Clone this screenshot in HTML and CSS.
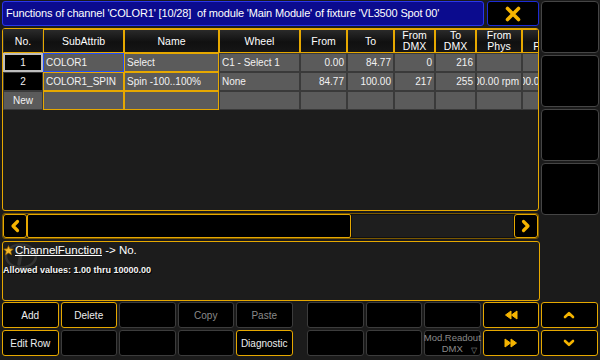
FILE: index.html
```html
<!DOCTYPE html>
<html lang="en">
<head>
<meta charset="UTF-8">
<title>Channel Functions</title>
<link rel="stylesheet" href="styles.css">
</head>
<body>
<div class="screen">
    <div class="top">
        <div class="main">
            <div class="titlebar">
                <div class="title">Functions of channel 'COLOR1' [10/28]&nbsp; of module 'Main Module' of fixture 'VL3500 Spot 00'</div>
                <div class="close">
                    <svg width="18" height="16" viewBox="0 0 18 16"><path d="M3.5 2.5 L14.5 13.5 M14.5 2.5 L3.5 13.5" stroke="#f5b400" stroke-width="3.6" stroke-linecap="round"/></svg>
                </div>
            </div>

            <div class="frame">
                <div class="grid">
                    <div class="cell head plain">No.</div>
                    <div class="cell head">SubAttrib</div>
                    <div class="cell head">Name</div>
                    <div class="cell head">Wheel</div>
                    <div class="cell head">From</div>
                    <div class="cell head">To</div>
                    <div class="cell head">From<br>DMX</div>
                    <div class="cell head">To<br>DMX</div>
                    <div class="cell head">From<br>Phys</div>
                    <div class="cell head">To<br>Phys</div>

                    <div class="cell no cur">1</div>
                    <div class="cell sel">COLOR1</div>
                    <div class="cell edit">Select</div>
                    <div class="cell">C1 - Select 1</div>
                    <div class="cell num">0.00</div>
                    <div class="cell num">84.77</div>
                    <div class="cell num">0</div>
                    <div class="cell num">216</div>
                    <div class="cell num"></div>
                    <div class="cell num"></div>

                    <div class="cell no">2</div>
                    <div class="cell edit">COLOR1_SPIN</div>
                    <div class="cell edit">Spin -100..100%</div>
                    <div class="cell">None</div>
                    <div class="cell num">84.77</div>
                    <div class="cell num">100.00</div>
                    <div class="cell num">217</div>
                    <div class="cell num">255</div>
                    <div class="cell num">-100.00 rpm</div>
                    <div class="cell num">100.00 rpm</div>

                    <div class="cell no new">New</div>
                    <div class="cell edit"></div>
                    <div class="cell edit"></div>
                    <div class="cell"></div>
                    <div class="cell"></div>
                    <div class="cell"></div>
                    <div class="cell"></div>
                    <div class="cell"></div>
                    <div class="cell"></div>
                    <div class="cell"></div>
                </div>
            </div>

            <div class="scroller">
                <div class="arrow">
                    <svg width="10" height="14" viewBox="0 0 10 14"><path d="M7.5 2.5 L3 7 L7.5 11.5" fill="none" stroke="#f5b400" stroke-width="3.2" stroke-linecap="round" stroke-linejoin="round"/></svg>
                </div>
                <div class="thumb"></div>
                <div class="track"></div>
                <div class="arrow">
                    <svg width="10" height="14" viewBox="0 0 10 14"><path d="M2.5 2.5 L7 7 L2.5 11.5" fill="none" stroke="#f5b400" stroke-width="3.2" stroke-linecap="round" stroke-linejoin="round"/></svg>
                </div>
            </div>
        </div>

        <div class="side">
            <div class="side-btn"></div>
            <div class="side-btn"></div>
            <div class="side-btn"></div>
            <div class="side-btn"></div>
        </div>
    </div>

    <div class="info">
        <svg class="watermark" width="36" height="26" viewBox="0 0 36 26"><ellipse cx="17" cy="13" rx="15" ry="11.5" fill="none" stroke="#333" stroke-width="2.5"/><path d="M17 10 L15 21" stroke="#333" stroke-width="3.5" stroke-linecap="round"/><circle cx="18" cy="5.5" r="2" fill="#333"/></svg>
        <div class="info-line">
            <svg width="11" height="11" viewBox="0 0 11 11"><path d="M5.5 0.6 L6.9 3.8 L10.4 4.1 L7.8 6.4 L8.6 9.9 L5.5 8.1 L2.4 9.9 L3.2 6.4 L0.6 4.1 L4.1 3.8 Z" fill="#f4b82a" stroke="#8a5a00" stroke-width="0.7"/></svg>
            <span class="link">ChannelFunction</span>&nbsp;-&gt; No.
        </div>
        <div class="allowed">Allowed values: 1.00 thru 10000.00</div>
    </div>

    <div class="keys">
        <div class="keygroup">
            <div class="key on">Add</div>
            <div class="key on">Delete</div>
            <div class="key"></div>
            <div class="key dim">Copy</div>
            <div class="key dim">Paste</div>
            <div class="key on">Edit Row</div>
            <div class="key"></div>
            <div class="key"></div>
            <div class="key"></div>
            <div class="key on">Diagnostic</div>
        </div>
        <div class="keygroup">
            <div class="key"></div>
            <div class="key"></div>
            <div class="key"></div>
            <div class="key on">
                <svg width="14" height="10" viewBox="0 0 14 10"><path d="M7 1 L1.5 5 L7 9 Z M13 1 L7.5 5 L13 9 Z" fill="#f5b400" stroke="#f5b400" stroke-width="1" stroke-linejoin="round"/></svg>
            </div>
            <div class="key on">
                <svg width="12" height="8" viewBox="0 0 12 8"><path d="M2 6 L6 2.2 L10 6" fill="none" stroke="#f5b400" stroke-width="2.6" stroke-linecap="round" stroke-linejoin="round"/></svg>
            </div>
            <div class="key"></div>
            <div class="key"></div>
            <div class="key dim readout">Mod.Readout<br>DMX<span class="tri">&#9661;</span></div>
            <div class="key on">
                <svg width="14" height="10" viewBox="0 0 14 10"><path d="M1 1 L6.5 5 L1 9 Z M7 1 L12.5 5 L7 9 Z" fill="#f5b400" stroke="#f5b400" stroke-width="1" stroke-linejoin="round"/></svg>
            </div>
            <div class="key on">
                <svg width="12" height="8" viewBox="0 0 12 8"><path d="M2 2 L6 5.8 L10 2" fill="none" stroke="#f5b400" stroke-width="2.6" stroke-linecap="round" stroke-linejoin="round"/></svg>
            </div>
        </div>
    </div>
</div>
</body>
</html>
```
FILE: styles.css
```css
* {
    box-sizing: border-box;
}

body {
    margin: 0;
    background-color: #1b1b1b;
    font-family: "Liberation Sans", Arial, sans-serif;
    color: #eeeeee;
}

.screen {
    width: 600px;
    height: 360px;
    padding: 1px 0 0 2px;
    overflow: hidden;
}

.top {
    display: flex;
    gap: 2px;
}

.main {
    width: 537px;
    display: flex;
    flex-direction: column;
}

/* title bar */
.titlebar {
    display: flex;
    gap: 3px;
    height: 25px;
}

.title {
    width: 482px;
    background-color: #0b0b8e;
    border: 1px solid #2a36ea;
    border-radius: 3px;
    color: #ffffff;
    font-size: 11px;
    letter-spacing: -0.15px;
    line-height: 23px;
    padding-left: 3px;
    white-space: nowrap;
    overflow: hidden;
}

.close {
    width: 52px;
    background-color: #000;
    border: 1px solid #1c2cd4;
    border-radius: 3px;
    display: flex;
    align-items: center;
    justify-content: center;
}

/* table */
.frame {
    margin-top: 2px;
    height: 183px;
    border: 1px solid #e6a800;
    border-radius: 3px;
    background-color: #1c1c1c;
    overflow: hidden;
}

.grid {
    display: grid;
    grid-template-columns: 40px 81px 95px 81px 47px 47px 41px 41px 46px 46px;
    grid-template-rows: 24px 19px 19px 19px;
    width: max-content;
}

.cell {
    border: 1px solid #3a3a3a;
    background-color: #5b5b5b;
    font-size: 10px;
    color: #f2f2f2;
    padding: 0 2px;
    display: flex;
    align-items: center;
    white-space: nowrap;
    overflow: hidden;
}

.cell.num { justify-content: flex-end; }
.cell.edit { border-color: #e6a800; }
.cell.sel { border-color: #1f4dff; }

.cell.head {
    background: linear-gradient(#2a2a2a, #101010 55%, #161616);
    border-color: #e6a800;
    justify-content: center;
    text-align: center;
    font-size: 10.5px;
    line-height: 11px;
    color: #ffffff;
}

.cell.head.plain {
    border-color: #2a2a2a;
    border-bottom-color: #e6a800;
}

.cell.no {
    justify-content: center;
    background-color: #000;
}

.cell.no.cur { border: 2px solid #bdbdbd; }
.cell.no.new { background-color: #5b5b5b; }

/* horizontal scroller */
.scroller {
    margin-top: 2px;
    height: 26px;
    display: flex;
    border: 1px solid #7a5800;
    border-radius: 3px;
    background-color: #1c1c1c;
}

.arrow {
    width: 24px;
    background-color: #000;
    border: 1px solid #e6a800;
    border-radius: 3px;
    display: flex;
    align-items: center;
    justify-content: center;
}

.thumb {
    width: 324px;
    background-color: #000;
    border: 1px solid #e6a800;
    border-radius: 2px;
}

.track {
    flex: 1;
    border: 1px solid #101010;
    background-color: #1e1e1e;
}

/* right column */
.side {
    width: 58px;
    display: flex;
    flex-direction: column;
    gap: 2px;
}

.side-btn {
    height: 52px;
    background-color: #000;
    border: 1px solid #454545;
    border-radius: 4px;
}

/* info box */
.info {
    position: relative;
    margin-top: 2px;
    width: 538px;
    height: 60px;
    border: 1px solid #e6a800;
    border-radius: 3px;
    background-color: #1c1c1c;
}

.watermark {
    position: absolute;
    left: 1px;
    top: 1px;
}

.info-line {
    position: relative;
    display: flex;
    align-items: center;
    height: 14px;
    margin-top: 1px;
    font-size: 11.5px;
    color: #ffffff;
}

.link {
    text-decoration: underline;
    margin-left: 1px;
}

.allowed {
    position: relative;
    margin-top: 8px;
    font-size: 9px;
    font-weight: bold;
    color: #f4f4f4;
    text-shadow: 1px 1px 0 #000;
}

/* keys */
.keys {
    margin-top: 1px;
    display: flex;
    gap: 14.5px;
}

.keygroup {
    display: grid;
    grid-template-columns: repeat(5, 56.5px);
    grid-template-rows: 26px 26px;
    gap: 2px;
}

.key {
    position: relative;
    background-color: #000;
    border: 1px solid #3c3c3c;
    border-radius: 3px;
    font-size: 10px;
    color: #eeeeee;
    display: flex;
    align-items: center;
    justify-content: center;
    text-align: center;
}

.key.on { border-color: #e6a800; }
.key.dim { color: #8a8a8a; }

.key.readout {
    font-size: 9.5px;
    line-height: 11px;
}

.tri {
    position: absolute;
    right: 3px;
    bottom: -1px;
    font-size: 8px;
    color: #8a8a8a;
}
```
